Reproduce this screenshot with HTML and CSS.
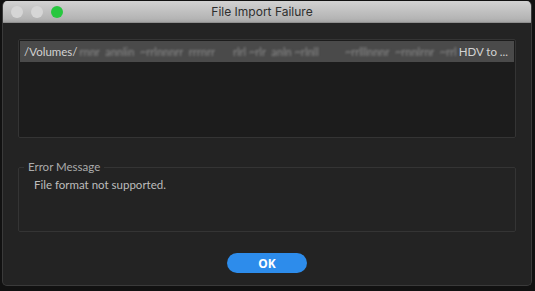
FILE: index.html
```html
<!DOCTYPE html>
<html>
<head>
    <title>File Import Failure</title>
    <link rel="stylesheet" href="styles.css">
</head>
<body>
    <!-- Dialog window -->
    <div class="window">
        <div class="titlebar">
            <div class="lights">
                <span class="light"></span>
                <span class="light"></span>
                <span class="light green"></span>
            </div>
            <div class="title">File Import Failure</div>
        </div>

        <div class="content">
            <!-- List of failed files -->
            <div class="file-list">
                <div class="file-row">
                    <span class="path">/Volumes/</span>
                    <span class="blurred">rnnr &nbsp;annlin &nbsp;~rrlnnnrr &nbsp;rrrnrr</span>
                    <span class="blurred gap">rlrl ~rlr &nbsp;anln ~rlnll</span>
                    <span class="spacer"></span>
                    <span class="blurred">~rrlllnnnr &nbsp;~rnnlrnr &nbsp;~rrl</span>
                    <span class="path">HDV to ...</span>
                </div>
            </div>

            <!-- Error message box -->
            <fieldset class="error-box">
                <legend>Error Message</legend>
                <p>File format not supported.</p>
            </fieldset>

            <div class="actions">
                <button class="ok">OK</button>
            </div>
        </div>
    </div>
</body>
</html>
```

FILE: styles.css
```css
/* Page background around the dialog */
body {
    margin: 0;
    background-color: #111111;
    font-family: "Lato", "Noto Sans", Arial, sans-serif;
}

/* Dialog window */
.window {
    width: 530px;
    height: 285px;
    margin: 1px 0 0 2px;
    background-color: #232323;
    border: 1px solid #3a3a3a;
    border-top: none;
    border-radius: 5px;
    overflow: hidden;
    box-sizing: border-box;
    display: flex;
    flex-direction: column;
}

.titlebar {
    height: 21px;
    background: linear-gradient(#d2d2d2, #b4b4b4 85%, #a4a4a4);
    border-bottom: 1px solid #8e8e8e;
    display: flex;
    align-items: center;
    position: relative;
}

.lights {
    position: absolute;
    left: 8px;
    top: 5px;
    display: flex;
    gap: 8px;
}

.light {
    width: 12px;
    height: 12px;
    border-radius: 50%;
    background-color: #d6d6d6;
}

.light.green {
    background-color: #27c73f;
}

.title {
    flex: 1;
    text-align: center;
    font-family: "Inter", "Noto Sans", Arial, sans-serif;
    font-size: 12px;
    color: #2e2e2e;
    padding-right: 10px;
}

.content {
    flex: 1;
    padding: 16px 15px 0 15px;
    display: flex;
    flex-direction: column;
}

/* File list */
.file-list {
    height: 99px;
    box-sizing: border-box;
    background-color: #1c1c1c;
    border: 1px solid #343434;
    border-radius: 2px;
    padding: 1px;
}

.file-row {
    height: 21px;
    background-color: #4a4a4a;
    display: flex;
    align-items: center;
    padding: 0 6px 0 4px;
    font-size: 11.5px;
    color: #d2d2d2;
    white-space: nowrap;
}

.blurred {
    color: #8c8c8c;
    filter: blur(1.1px);
    font-size: 11px;
    padding: 0 2px;
}

.blurred.gap {
    margin-left: 14px;
}

.spacer {
    flex: 1;
}

/* Error message */
.error-box {
    margin: 21px 0 0 0;
    height: 73px;
    box-sizing: border-box;
    border: 1px solid #343434;
    border-radius: 2px;
    padding: 0 14px 0 5px;
}

.error-box legend {
    padding: 0 4px;
    font-size: 11.5px;
    color: #ababab;
    line-height: 16px;
}

.error-box p {
    margin: 3px 0 0 10px;
    font-size: 11.5px;
    color: #bdbdbd;
    line-height: 14px;
}

.actions {
    display: flex;
    justify-content: center;
    margin-top: 21px;
}

.ok {
    width: 80px;
    height: 20px;
    border: none;
    border-radius: 10px;
    background-color: #2d8ceb;
    color: #ffffff;
    font-family: "Noto Sans", Arial, sans-serif;
    font-weight: bold;
    font-size: 12px;
    padding: 0;
}
```
